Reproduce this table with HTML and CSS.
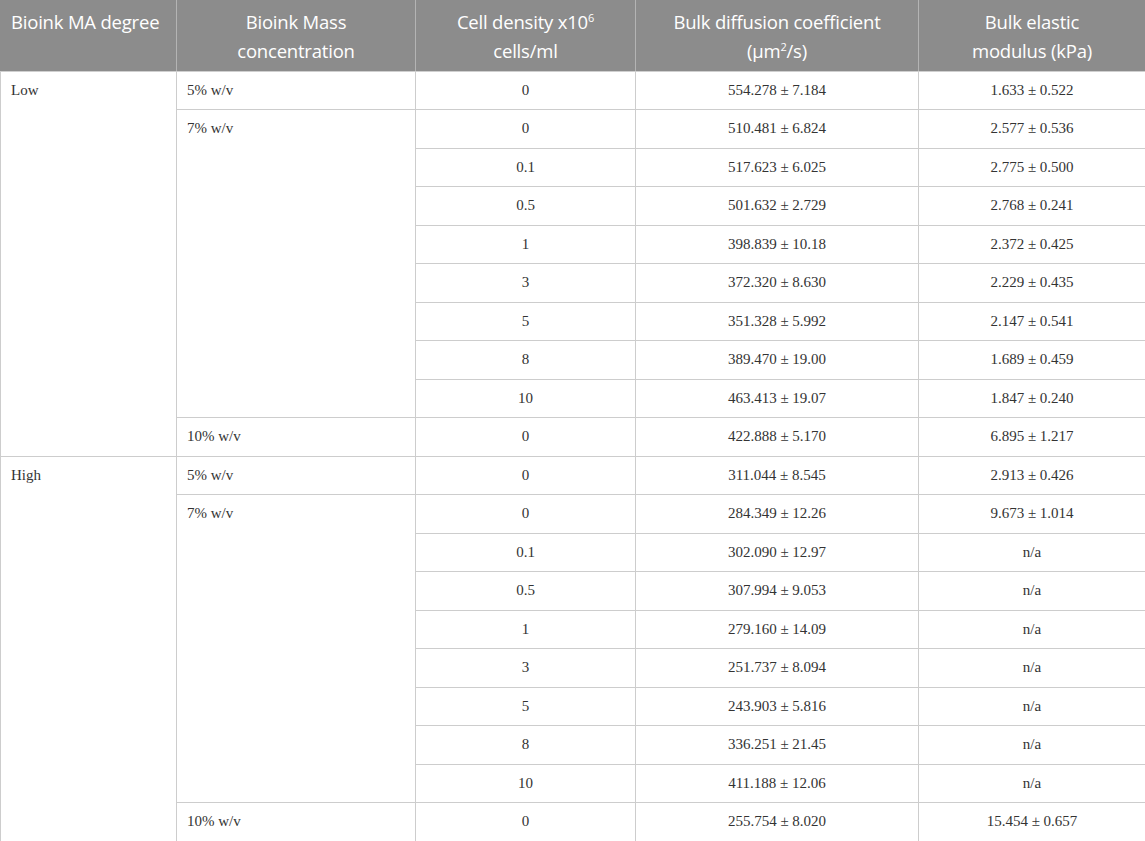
FILE: index.html
```html
<!DOCTYPE html>
<html>
<head>
<meta charset="utf-8">
<link rel="stylesheet" href="styles.css">
</head>
<body>
<table class="data">
  <colgroup>
    <col class="c1"><col class="c2"><col class="c3"><col class="c4"><col class="c5">
  </colgroup>
  <thead>
    <tr>
      <th class="left">Bioink MA degree</th>
      <th>Bioink Mass<br>concentration</th>
      <th>Cell density x10<sup>6</sup><br>cells/ml</th>
      <th>Bulk diffusion coefficient<br>(µm<sup>2</sup>/s)</th>
      <th>Bulk elastic<br>modulus (kPa)</th>
    </tr>
  </thead>
  <tbody>
    <tr><td class="left top" rowspan="10">Low</td><td class="left">5% w/v</td><td>0</td><td>554.278 ± 7.184</td><td>1.633 ± 0.522</td></tr>
    <tr><td class="left top" rowspan="8">7% w/v</td><td>0</td><td>510.481 ± 6.824</td><td>2.577 ± 0.536</td></tr>
    <tr><td>0.1</td><td>517.623 ± 6.025</td><td>2.775 ± 0.500</td></tr>
    <tr><td>0.5</td><td>501.632 ± 2.729</td><td>2.768 ± 0.241</td></tr>
    <tr><td>1</td><td>398.839 ± 10.18</td><td>2.372 ± 0.425</td></tr>
    <tr><td>3</td><td>372.320 ± 8.630</td><td>2.229 ± 0.435</td></tr>
    <tr><td>5</td><td>351.328 ± 5.992</td><td>2.147 ± 0.541</td></tr>
    <tr><td>8</td><td>389.470 ± 19.00</td><td>1.689 ± 0.459</td></tr>
    <tr><td>10</td><td>463.413 ± 19.07</td><td>1.847 ± 0.240</td></tr>
    <tr><td class="left">10% w/v</td><td>0</td><td>422.888 ± 5.170</td><td>6.895 ± 1.217</td></tr>
    <tr><td class="left top" rowspan="10">High</td><td class="left">5% w/v</td><td>0</td><td>311.044 ± 8.545</td><td>2.913 ± 0.426</td></tr>
    <tr><td class="left top" rowspan="8">7% w/v</td><td>0</td><td>284.349 ± 12.26</td><td>9.673 ± 1.014</td></tr>
    <tr><td>0.1</td><td>302.090 ± 12.97</td><td>n/a</td></tr>
    <tr><td>0.5</td><td>307.994 ± 9.053</td><td>n/a</td></tr>
    <tr><td>1</td><td>279.160 ± 14.09</td><td>n/a</td></tr>
    <tr><td>3</td><td>251.737 ± 8.094</td><td>n/a</td></tr>
    <tr><td>5</td><td>243.903 ± 5.816</td><td>n/a</td></tr>
    <tr><td>8</td><td>336.251 ± 21.45</td><td>n/a</td></tr>
    <tr><td>10</td><td>411.188 ± 12.06</td><td>n/a</td></tr>
    <tr><td class="left">10% w/v</td><td>0</td><td>255.754 ± 8.020</td><td>15.454 ± 0.657</td></tr>
  </tbody>
</table>
</body>
</html>
```

FILE: styles.css
```css
html, body {
  margin: 0;
  padding: 0;
  background: #fff;
}
.data {
  width: 1145px;
  border-collapse: collapse;
  table-layout: fixed;
}
.c1 { width: 176px; }
.c2 { width: 239px; }
.c3 { width: 220px; }
.c4 { width: 283px; }
.c5 { width: 227px; }
.data th {
  background: #8c8c8c;
  color: #fff;
  font-family: "Open Sans", "Noto Sans", sans-serif;
  font-weight: 400;
  font-size: 18.5px;
  letter-spacing: -0.2px;
  line-height: 29px;
  height: 71px;
  padding: 7px 10px 0;
  text-align: center;
  vertical-align: top;
  border-left: 1px solid #b4b4b4;
  border-right: 1px solid #b4b4b4;
  border-bottom: 1px solid #cfcfcf;
  box-sizing: border-box;
}
.data th.left { text-align: left; }
.data th:first-child { border-left-color: #8c8c8c; }
.data th:last-child { border-right-color: #8c8c8c; }
.data th sup {
  font-size: 11px;
  line-height: 11px;
  vertical-align: 7px;
}
.data td {
  font-family: "Liberation Serif", "Times New Roman", serif;
  font-size: 15px;
  color: #333;
  height: 38.5px;
  padding: 0 10px;
  text-align: center;
  vertical-align: middle;
  border: 1px solid #cdcdcd;
  box-sizing: border-box;
}
.data td.left { text-align: left; }
.data td.top { vertical-align: top; padding-top: 10px; }
```
